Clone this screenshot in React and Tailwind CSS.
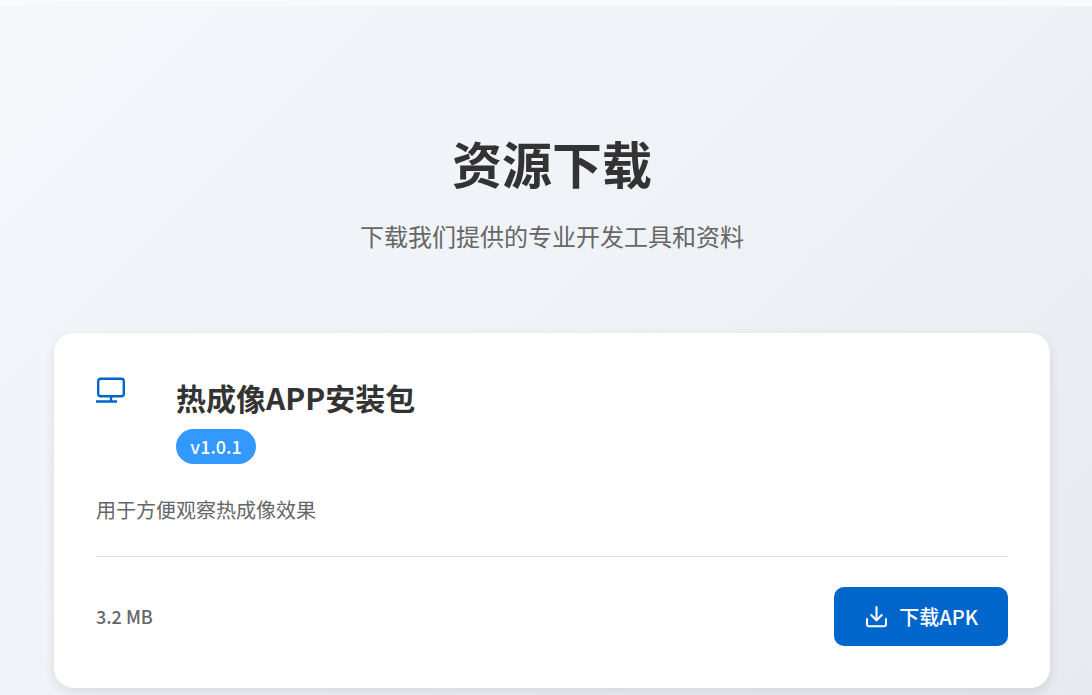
import React from 'react';

const resources = [
  {
    id: 'thermal-app',
    title: '热成像APP安装包',
    version: 'v1.0.1',
    description: '用于方便观察热成像效果',
    size: '3.2 MB',
    action: '下载APK',
  },
];

function MonitorIcon(){
  return (
    <svg className="w-[30px] h-[30px]" viewBox="0 0 30 30" fill="none" stroke="currentColor" strokeWidth="2.4" aria-hidden="true">
      <rect x="2.2" y="3.7" width="25.6" height="17.6" rx="2.6"/>
      <path d="M15 21.5v5M0 26.5h21"/>
    </svg>
  );
}

function DownloadIcon(){
  return (
    <svg className="w-6 h-6" viewBox="0 0 24 24" fill="none" stroke="currentColor" strokeWidth="2" strokeLinecap="round" strokeLinejoin="round" aria-hidden="true">
      <path d="M3 14v5.5a1.8 1.8 0 0 0 1.8 1.8h15.4a1.8 1.8 0 0 0 1.8-1.8v-5.5"/>
      <path d="M7.2 10l5.3 5.3 5.3-5.3"/>
      <path d="M12.5 15.3V2"/>
    </svg>
  );
}

function ResourceCard({item}){
  return (
    <article className="bg-white rounded-[20px] p-[42px] shadow-[0_4px_12px_rgba(0,0,0,0.1)]">
      <div className="flex items-start gap-[50px]">
        <div className="text-[#0066cc]"><MonitorIcon/></div>
        <div>
          <h2 className="text-[30px] leading-11 font-bold text-[#333333]">{item.title}</h2>
          <span className="mt-2.5 block w-fit min-w-20 rounded-full bg-[#3399ff] px-3.5 text-center text-lg leading-[35px] font-medium text-white">{item.version}</span>
        </div>
      </div>
      <p className="mt-[30px] text-xl leading-8 text-[#666666]">{item.description}</p>
      <div className="mt-[30px] flex items-center justify-between border-t border-[#dddddd] pt-[30px]">
        <span className="text-lg leading-[27px] font-medium text-[#666666]">{item.size}</span>
        <button type="button" className="flex items-center gap-[11px] h-[59px] rounded-[10px] bg-[#0066cc] px-[30px] text-xl font-medium text-white">
          <DownloadIcon/>
          {item.action}
        </button>
      </div>
    </article>
  );
}

export default function App(){
  return (
    <div className="min-h-screen bg-linear-135 from-[#f5f7fb] via-[#eff2f6] to-[#e7eaef] font-['Noto_Sans_CJK_SC',sans-serif]">
      <div className="h-1.5 bg-[#f8fafc]"></div>
      <main className="pl-[54px] pr-[42px] pt-[116px] pb-[7px]">
        <header className="mb-[77px] text-center">
          <h1 className="text-[50px] leading-[80px] font-bold text-[#333333]">资源下载</h1>
          <p className="mt-3.5 text-2xl leading-10 text-[#666666]">下载我们提供的专业开发工具和资料</p>
        </header>
        <div className="grid gap-8">
          {resources.map(r=><ResourceCard key={r.id} item={r}/>)}
        </div>
      </main>
    </div>
  );
}
